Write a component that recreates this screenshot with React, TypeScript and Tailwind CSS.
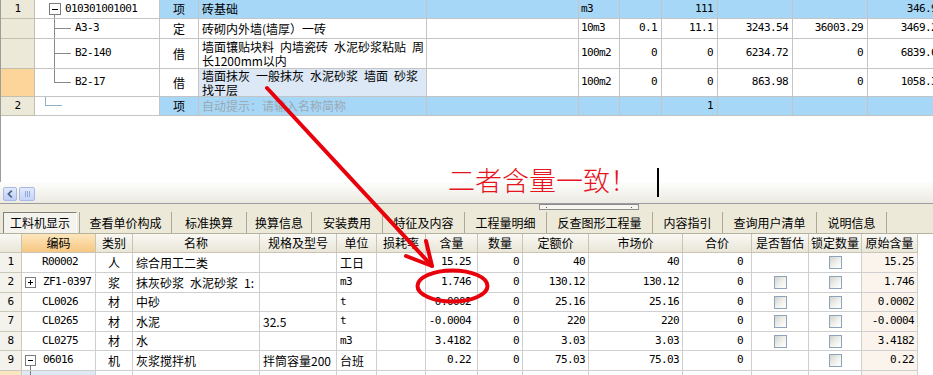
import React from 'react';

const MONO = "font-['DejaVu_Sans_Mono','Noto_Sans_CJK_SC',monospace] text-[11px] tracking-[-0.6px]";

function TreeBox({ size, plus }: { size: number; plus?: boolean }) {
  const m = Math.floor(size / 2) + 0.5;
  return (
    <svg width={size} height={size} viewBox={`0 0 ${size} ${size}`} className="block shrink-0">
      <rect x="0.5" y="0.5" width={size - 1} height={size - 1} fill="#fff" stroke="#7c7c7c" />
      <path d={`M3 ${m}H${size - 3}`} stroke="#000" />
      {plus && <path d={`M${m} 3V${size - 3}`} stroke="#000" />}
    </svg>
  );
}

function Check() {
  return (
    <span className="block h-[13px] w-[13px] border border-[#8ea3bd] bg-linear-to-br from-[#d3d3cd] via-[#efefea] to-white" />
  );
}

type TopRowData = {
  h: string;
  num: string;
  numBg: string;
  rowBg: string;
  nameBg: string;
  tree: 'root' | 'mid' | 'last' | 'new';
  code: string;
  type: string;
  name: React.ReactNode;
  nameCls: string;
  unit: string;
  v: string[];
};

const topRows: TopRowData[] = [
  {
    h: 'h-[19px]', num: '1', numBg: 'bg-[#ece9d8]', rowBg: 'bg-[#a7d7f7]', nameBg: 'bg-[#a7d7f7]',
    tree: 'root', code: '010301001001', type: '项', name: '砖基础', nameCls: '', unit: 'm3',
    v: ['', '111', '', '', '346.95'],
  },
  {
    h: 'h-[20px]', num: '', numBg: 'bg-[#ece9d8]', rowBg: 'bg-white', nameBg: 'bg-white',
    tree: 'mid', code: 'A3-3', type: '定', name: '砖砌内外墙(墙厚）一砖', nameCls: '', unit: '10m3',
    v: ['0.1', '11.1', '3243.54', '36003.29', '3469.25'],
  },
  {
    h: 'h-[30px]', num: '', numBg: 'bg-[#ece9d8]', rowBg: 'bg-white', nameBg: 'bg-white',
    tree: 'mid', code: 'B2-140', type: '借',
    name: (
      <>
        {'墙面镶贴块料\u2002内墙瓷砖\u2002水泥砂浆粘贴\u2002周'}
        <br />
        长1200mm以内
      </>
    ),
    nameCls: '', unit: '100m2',
    v: ['0', '0', '6234.72', '0', '6839.65'],
  },
  {
    h: 'h-[28px]', num: '', numBg: 'bg-[#fdd59b]', rowBg: 'bg-white', nameBg: 'bg-[#dde8f6]',
    tree: 'last', code: 'B2-17', type: '借',
    name: (
      <>
        {'墙面抹灰\u2002一般抹灰\u2002水泥砂浆\u2002墙面\u2002砂浆'}
        <br />
        找平层
      </>
    ),
    nameCls: '', unit: '100m2',
    v: ['0', '0', '863.98', '0', '1058.34'],
  },
  {
    h: 'h-[19px]', num: '2', numBg: 'bg-[#ece9d8]', rowBg: 'bg-[#a7d7f7]', nameBg: 'bg-[#a7d7f7]',
    tree: 'new', code: '', type: '项', name: '自动提示：请输入名称简称', nameCls: 'text-[#9aa9b4]', unit: '',
    v: ['', '1', '', '', ''],
  },
];

function TopTree({ kind, code }: { kind: TopRowData['tree']; code: string }) {
  if (kind === 'root') {
    return (
      <>
        <div className="w-[14px] shrink-0" />
        <div className="flex w-[12px] shrink-0 flex-col self-stretch">
          <div className="h-[3px]" />
          <TreeBox size={12} />
          <div className="ml-[5px] flex-1 border-l border-[#7d8f9c]" />
        </div>
        <span className="pl-[4px]">{code}</span>
      </>
    );
  }
  if (kind === 'mid') {
    return (
      <>
        <div className="w-[19px] shrink-0" />
        <div className="w-[17px] shrink-0 self-stretch border-l border-[#8a8a8a]">
          <div className="h-1/2 border-b border-[#8a8a8a]" />
        </div>
        <span className="pl-[4px]">{code}</span>
      </>
    );
  }
  if (kind === 'last') {
    return (
      <>
        <div className="w-[19px] shrink-0" />
        <div className="w-[17px] shrink-0 self-stretch">
          <div className="h-1/2 border-b border-l border-[#8a8a8a]" />
        </div>
        <span className="pl-[4px]">{code}</span>
      </>
    );
  }
  return (
    <>
      <div className="w-[10px] shrink-0" />
      <div className="w-[17px] shrink-0 self-stretch">
        <div className="h-1/2 border-b border-l border-[#8fb2cc]" />
      </div>
    </>
  );
}

function TopRow({ r }: { r: TopRowData }) {
  const cell = 'flex shrink-0 items-center overflow-hidden whitespace-nowrap border-r border-b border-[#c4c4c4]';
  const num = `${cell} justify-end pr-[4px] ${MONO}`;
  return (
    <div className={`flex w-[947px] ${r.h} ${r.rowBg}`}>
      <div className={`flex w-[34px] shrink-0 items-center justify-center border-r border-b border-[#c2bfae] ${r.numBg} ${MONO}`}>
        {r.num}
      </div>
      <div className={`${cell} w-[125px] bg-white ${MONO} ${r.rowBg}`}>
        <TopTree kind={r.tree} code={r.code} />
      </div>
      <div className={`${cell} w-[39px] justify-center`}>{r.type}</div>
      <div className={`${cell} w-[228px] pl-[3px] leading-[14px] ${r.nameBg} ${r.nameCls}`}>
        <div>{r.name}</div>
      </div>
      <div className={`${cell} w-[152px]`} />
      <div className={`${cell} w-[41px] pl-[2px] ${MONO}`}>{r.unit}</div>
      <div className={`${num} w-[42px]`}>{r.v[0]}</div>
      <div className={`${num} w-[56px]`}>{r.v[1]}</div>
      <div className={`${num} w-[75px]`}>{r.v[2]}</div>
      <div className={`${num} w-[75px]`}>{r.v[3]}</div>
      <div className={`${num} w-[80px]`}>{r.v[4]}</div>
    </div>
  );
}

function Scrollbar() {
  return (
    <div className="flex h-[21px] items-start gap-[2px] bg-linear-to-b from-[#fdfdfc] to-[#ebeae2] pt-[5px] pl-[3px]">
      <div className="flex h-[14px] w-[14px] items-center justify-center rounded-[2px] border border-[#a7b9e3] bg-linear-to-b from-[#e2eafd] to-[#bccdf6]">
        <svg width="6" height="8" viewBox="0 0 6 8">
          <path d="M4.8 0.6 L1.4 4 L4.8 7.4" stroke="#4d6185" strokeWidth="1.7" fill="none" />
        </svg>
      </div>
      <div className="flex h-[14px] w-[16px] items-center justify-center gap-[1px] rounded-[2px] border border-[#a7b9e3] bg-linear-to-b from-[#e2eafd] to-[#c5d4f8]">
        <span className="h-[6px] w-px bg-[#8fa7dd]" />
        <span className="h-[6px] w-px bg-[#8fa7dd]" />
        <span className="h-[6px] w-px bg-[#8fa7dd]" />
      </div>
    </div>
  );
}

const tabs: [string, string][] = [
  ['查看单价构成', 'w-[92px]'],
  ['标准换算', 'w-[75px]'],
  ['换算信息', 'w-[65px]'],
  ['安装费用', 'w-[71px]'],
  ['特征及内容', 'w-[82px]'],
  ['工程量明细', 'w-[82px]'],
  ['反查图形工程量', 'w-[106px]'],
  ['内容指引', 'w-[70px]'],
  ['查询用户清单', 'w-[94px]'],
  ['说明信息', 'w-[70px]'],
];

function TabBar() {
  return (
    <div className="flex h-[29px] flex-col bg-[#ece9d8]">
      <div className="h-[8px]">
        <div className="ml-[539px] flex h-[6px] w-[100px] items-center justify-between border border-[#8c8c8c] bg-[#f6f5f0] px-[6px]">
          <span className="h-px w-px bg-[#555]" />
          <span className="h-px w-px bg-[#555]" />
        </div>
      </div>
      <div className="flex h-[21px]">
        <div className="ml-[3px] flex w-[74px] items-center justify-center border-t border-l border-r border-t-[#7f7f7f] border-l-[#7f7f7f] border-r-white bg-[#f4f3ee]">
          工料机显示
        </div>
        <div className="w-[3px] border-r border-[#aca899]" />
        {tabs.map(([label, w]) => (
          <div key={label} className={`flex ${w} items-center justify-center border-r border-[#aca899]`}>
            {label}
          </div>
        ))}
      </div>
    </div>
  );
}

const lowCols = [
  'w-[22px]', 'w-[74px]', 'w-[37px]', 'w-[127px]', 'w-[77px]', 'w-[40px]', 'w-[49px]', 'w-[52px]',
  'w-[45px]', 'w-[66px]', 'w-[94px]', 'w-[69px]', 'w-[57px]', 'w-[53px]', 'w-[56px]',
];
const heads = ['', '编码', '类别', '名称', '规格及型号', '单位', '损耗率', '含量', '数量', '定额价', '市场价', '合价', '是否暂估', '锁定数量', '原始含量'];

type LowRow = {
  h: string;
  num: string;
  tree?: 'plus' | 'minus';
  code: string;
  type: string;
  name: string;
  spec: string;
  unit: string;
  unitCjk?: boolean;
  qty: string;
  amt: string;
  price: string;
  market: string;
  total: string;
  est: boolean;
  lock: boolean;
  orig: string;
};

const lowRows: LowRow[] = [
  { h: 'h-[20px]', num: '1', code: 'R00002', type: '人', name: '综合用工二类', spec: '', unit: '工日', unitCjk: true, qty: '15.25', amt: '0', price: '40', market: '40', total: '0', est: false, lock: true, orig: '15.25' },
  { h: 'h-[20px]', num: '2', tree: 'plus', code: 'ZF1-0397', type: '浆', name: '抹灰砂浆\u2002水泥砂浆\u20021:', spec: '', unit: 'm3', qty: '1.746', amt: '0', price: '130.12', market: '130.12', total: '0', est: true, lock: true, orig: '1.746' },
  { h: 'h-[19px]', num: '6', code: 'CL0026', type: '材', name: '中砂', spec: '', unit: 't', qty: '0.0002', amt: '0', price: '25.16', market: '25.16', total: '0', est: true, lock: true, orig: '0.0002' },
  { h: 'h-[20px]', num: '7', code: 'CL0265', type: '材', name: '水泥', spec: '32.5', unit: 't', qty: '-0.0004', amt: '0', price: '220', market: '220', total: '0', est: true, lock: true, orig: '-0.0004' },
  { h: 'h-[19px]', num: '8', code: 'CL0275', type: '材', name: '水', spec: '', unit: 'm3', qty: '3.4182', amt: '0', price: '3.03', market: '3.03', total: '0', est: true, lock: true, orig: '3.4182' },
  { h: 'h-[20px]', num: '9', tree: 'minus', code: '06016', type: '机', name: '灰浆搅拌机', spec: '拌筒容量200', unit: '台班', unitCjk: true, qty: '0.22', amt: '0', price: '75.03', market: '75.03', total: '0', est: false, lock: true, orig: '0.22' },
];

function LowCode({ r }: { r: LowRow }) {
  if (r.tree === 'plus') {
    return (
      <>
        <div className="w-[3px] shrink-0" />
        <TreeBox size={11} plus />
        <span className="pl-[7px]">{r.code}</span>
      </>
    );
  }
  if (r.tree === 'minus') {
    return (
      <>
        <div className="w-[3px] shrink-0" />
        <div className="flex w-[11px] shrink-0 flex-col self-stretch">
          <div className="flex-1" />
          <TreeBox size={11} />
          <div className="ml-[5px] flex-1 border-l border-[#7c7c7c]" />
        </div>
        <span className="pl-[7px]">{r.code}</span>
      </>
    );
  }
  return <span className="pl-[20px]">{r.code}</span>;
}

function LowerTable() {
  const cell = 'flex shrink-0 items-center overflow-hidden whitespace-nowrap border-r border-b border-[#cfcfcf]';
  const num = `${cell} justify-end pr-[3px] ${MONO}`;
  return (
    <div>
      <div className="flex h-[20px] border-t border-[#b5b1a1]">
        {heads.map((hd, i) => (
          <div
            key={i}
            className={`flex ${lowCols[i]} shrink-0 items-center justify-center border-r border-b border-[#c9c5b5] ${
              i === 1 ? 'bg-linear-to-b from-[#fde6bd] to-[#f6c781]' : 'bg-linear-to-b from-[#f9f8f3] to-[#e9e6d8]'
            }`}
          >
            {hd}
          </div>
        ))}
      </div>
      {lowRows.map((r) => (
        <div key={r.num} className={`flex ${r.h}`}>
          <div className={`flex w-[22px] shrink-0 items-center justify-center border-r border-b border-[#cdc9ba] bg-[#f3f2ec] ${MONO}`}>
            {r.num}
          </div>
          <div className={`${cell} w-[74px] ${MONO}`}>
            <LowCode r={r} />
          </div>
          <div className={`${cell} w-[37px] justify-center`}>{r.type}</div>
          <div className={`${cell} w-[127px] pl-[3px]`}>{r.name}</div>
          <div className={`${cell} w-[77px] pl-[3px]`}>{r.spec}</div>
          <div className={`${cell} w-[40px] pl-[3px] ${r.unitCjk ? '' : MONO}`}>{r.unit}</div>
          <div className={`${cell} w-[49px]`} />
          <div className={`${num} w-[52px] pr-[6px]`}>{r.qty}</div>
          <div className={`${num} w-[45px]`}>{r.amt}</div>
          <div className={`${num} w-[66px]`}>{r.price}</div>
          <div className={`${num} w-[94px] pr-[2px]`}>{r.market}</div>
          <div className={`${num} w-[69px] pr-[8px]`}>{r.total}</div>
          <div className={`${cell} w-[57px] justify-center`}>{r.est && <Check />}</div>
          <div className={`${cell} w-[53px] justify-center`}>{r.lock && <Check />}</div>
          <div className={`${num} w-[56px] bg-[#fbf4ec]`}>{r.orig}</div>
        </div>
      ))}
      <div className="flex h-[20px]">
        <div className="w-[22px] shrink-0 border-r border-[#cdc9ba] bg-[#fbe6c2]" />
        <div className="w-[74px] shrink-0 border-r border-[#cfcfcf] bg-[#dfe9f6] pl-[8px]">
          <div className="h-full border-l border-[#7c7c7c]" />
        </div>
        <div className="flex w-[37px] shrink-0 items-center justify-center border-r border-[#cfcfcf]">材</div>
        <div className="flex w-[127px] shrink-0 items-center border-r border-[#cfcfcf] pl-[3px]">电</div>
        <div className="w-[77px] shrink-0 border-r border-[#cfcfcf]" />
        <div className="w-[40px] shrink-0 border-r border-[#cfcfcf]" />
        <div className="w-[49px] shrink-0 border-r border-[#cfcfcf]" />
        <div className="w-[52px] shrink-0 border-r border-[#cfcfcf]" />
        <div className="w-[45px] shrink-0 border-r border-[#cfcfcf]" />
        <div className="w-[66px] shrink-0 border-r border-[#cfcfcf]" />
        <div className="w-[94px] shrink-0 border-r border-[#cfcfcf]" />
        <div className="w-[69px] shrink-0 border-r border-[#cfcfcf]" />
        <div className="w-[57px] shrink-0 border-r border-[#cfcfcf]" />
        <div className="w-[53px] shrink-0 border-r border-[#cfcfcf]" />
        <div className="w-[56px] shrink-0 border-r border-[#cfcfcf] bg-[#fbf4ec]" />
      </div>
    </div>
  );
}

export default function App() {
  return (
    <div className="relative h-[375px] w-[933px] overflow-hidden bg-white font-['Noto_Sans_CJK_SC',sans-serif] text-[12px] text-black">
      {/* upper grid */}
      <div className="h-[182px] overflow-hidden border-l border-[#9c9c9c]">
        {topRows.map((r, i) => (
          <TopRow key={i} r={r} />
        ))}
      </div>
      <Scrollbar />
      <div className="h-px bg-[#9d9da1]" />
      <TabBar />
      <LowerTable />

      {/* red markup drawn on the screenshot */}
      <svg className="pointer-events-none absolute top-0 left-0" width="933" height="375">
        <g stroke="#e8000b" strokeWidth="4" strokeLinecap="round" strokeLinejoin="round" fill="none">
          <path d="M267 88 L432 266" />
          <path d="M406 256 L432 266 L426 241" />
          <ellipse cx="452.5" cy="286" rx="35" ry="15.5" />
        </g>
      </svg>
      <div className="pointer-events-none absolute top-[166px] left-[448px] text-[27px] leading-none font-light text-[#e5141d]">
        二者含量一致！
      </div>
      <div className="absolute top-[168px] left-[657px] h-[29px] w-[2px] bg-black" />
    </div>
  );
}
